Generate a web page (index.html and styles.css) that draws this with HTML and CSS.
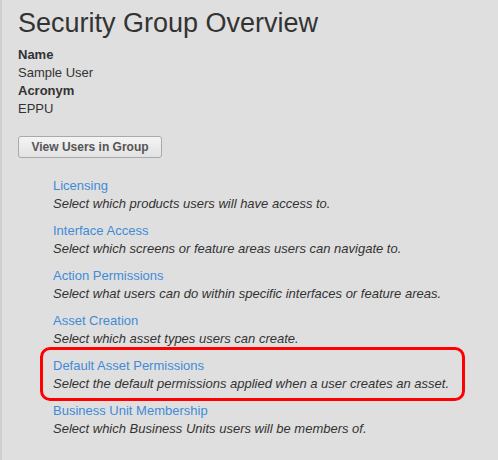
FILE: index.html
```html
<!DOCTYPE html>
<html>
<head>
<meta charset="utf-8">
<link rel="stylesheet" href="styles.css">
</head>
<body>
<div class="page">
  <h1 class="title">Security Group Overview</h1>
  <dl class="info">
    <dt>Name</dt>
    <dd>Sample User</dd>
    <dt>Acronym</dt>
    <dd>EPPU</dd>
  </dl>
  <button class="btn">View Users in Group</button>
  <ul class="links">
    <li><a href="#">Licensing</a><p>Select which products users will have access to.</p></li>
    <li><a href="#">Interface Access</a><p>Select which screens or feature areas users can navigate to.</p></li>
    <li><a href="#">Action Permissions</a><p>Select what users can do within specific interfaces or feature areas.</p></li>
    <li><a href="#">Asset Creation</a><p>Select which asset types users can create.</p></li>
    <li class="highlight"><a href="#">Default Asset Permissions</a><p>Select the default permissions applied when a user creates an asset.</p></li>
    <li><a href="#">Business Unit Membership</a><p>Select which Business Units users will be members of.</p></li>
  </ul>
</div>
</body>
</html>
```
FILE: styles.css
```css
html, body {
  margin: 0;
  padding: 0;
  height: 100%;
}
body {
  background: #dfdfdf;
  font-family: "Liberation Sans", Arial, sans-serif;
  color: #333;
  font-size: 13px;
}
.page {
  min-height: 100%;
  box-sizing: border-box;
  border-left: 2px solid #d0d0d0;
  padding: 4px 0 0 16px;
}
.title {
  margin: 0;
  font-weight: normal;
  font-size: 27px;
  line-height: 38px;
  color: #333;
}
.info {
  margin: 4px 0 0;
  line-height: 18px;
}
.info dt {
  font-weight: bold;
}
.info dd {
  margin: 0;
}
.btn {
  margin-top: 18px;
  display: block;
  width: 144px;
  height: 22px;
  padding: 0;
  border: 1px solid #a9a9a9;
  border-radius: 3px;
  background: linear-gradient(#f4f4f4, #e2e2e2);
  font-family: "Liberation Sans", Arial, sans-serif;
  font-weight: bold;
  font-size: 12px;
  color: #555;
}
.links {
  list-style: none;
  margin: 19px 0 0;
  padding: 0 0 0 35px;
}
.links li {
  position: relative;
  margin-bottom: 9px;
  line-height: 18px;
}
.links a {
  color: #3f8bd8;
  text-decoration: none;
}
.links p {
  margin: 0;
  font-style: italic;
  color: #333;
}
.highlight::before {
  content: "";
  position: absolute;
  left: -13px;
  top: -10px;
  width: 419px;
  height: 48px;
  border: 3px solid #ff0000;
  border-radius: 10px;
}
```
